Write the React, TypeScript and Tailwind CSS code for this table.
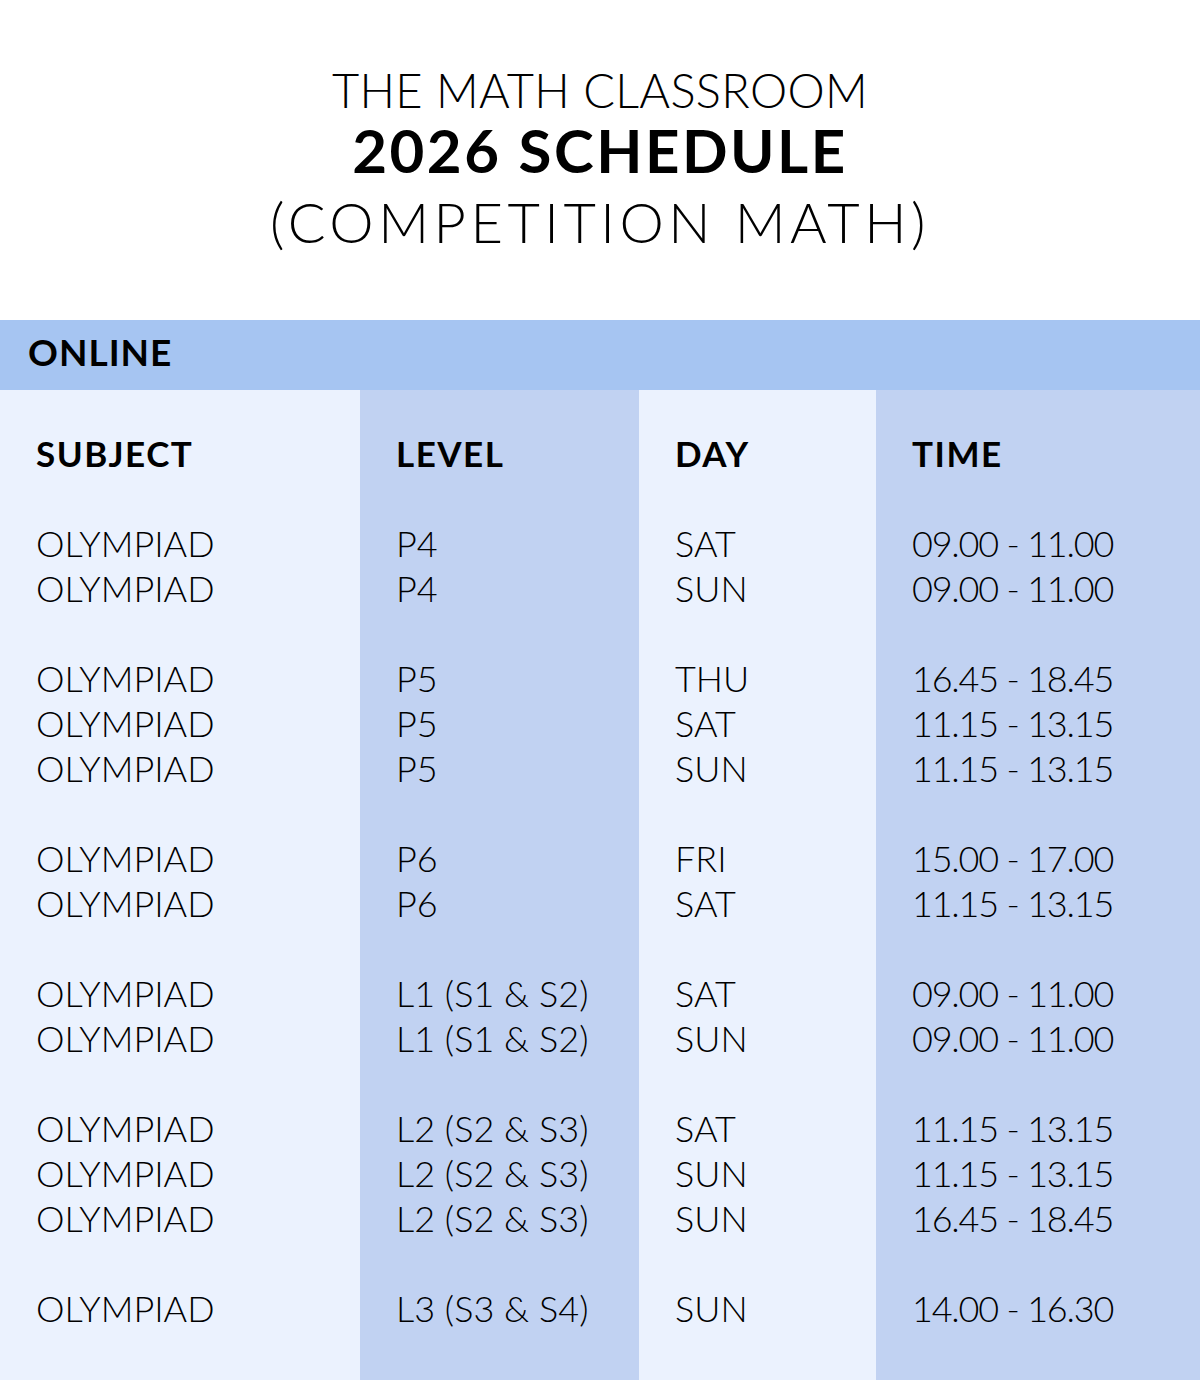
import React from "react";

type Row = [string, string, string, string] | null;

// null = empty spacer row between groups
const rows: Row[] = [
  ["OLYMPIAD", "P4", "SAT", "09.00 - 11.00"],
  ["OLYMPIAD", "P4", "SUN", "09.00 - 11.00"],
  null,
  ["OLYMPIAD", "P5", "THU", "16.45 - 18.45"],
  ["OLYMPIAD", "P5", "SAT", "11.15 - 13.15"],
  ["OLYMPIAD", "P5", "SUN", "11.15 - 13.15"],
  null,
  ["OLYMPIAD", "P6", "FRI", "15.00 - 17.00"],
  ["OLYMPIAD", "P6", "SAT", "11.15 - 13.15"],
  null,
  ["OLYMPIAD", "L1 (S1 & S2)", "SAT", "09.00 - 11.00"],
  ["OLYMPIAD", "L1 (S1 & S2)", "SUN", "09.00 - 11.00"],
  null,
  ["OLYMPIAD", "L2 (S2 & S3)", "SAT", "11.15 - 13.15"],
  ["OLYMPIAD", "L2 (S2 & S3)", "SUN", "11.15 - 13.15"],
  ["OLYMPIAD", "L2 (S2 & S3)", "SUN", "16.45 - 18.45"],
  null,
  ["OLYMPIAD", "L3 (S3 & S4)", "SUN", "14.00 - 16.30"],
];

const columns = [
  { title: "SUBJECT", width: "w-[360px]", bg: "bg-[#ebf2fe]", cell: "" },
  { title: "LEVEL", width: "w-[279px]", bg: "bg-[#c1d2f2]", cell: "" },
  { title: "DAY", width: "w-[237px]", bg: "bg-[#ebf2fe]", cell: "" },
  { title: "TIME", width: "w-[324px]", bg: "bg-[#c1d2f2]", cell: "tracking-[-1.2px]" },
];

export default function App() {
  return (
    <div className="w-[1200px] h-[1380px] bg-white text-black font-['Lato',sans-serif]">
      {/* heading */}
      <div className="h-[320px] flex flex-col items-center pt-[62px]">
        <div className="text-[47px] leading-[56px] font-light tracking-[0.3px]">THE MATH CLASSROOM</div>
        <div className="text-[60px] leading-[64px] font-bold tracking-[2.5px]">2026 SCHEDULE</div>
        <div className="text-[56px] leading-[79px] font-light tracking-[4.5px]">(COMPETITION MATH)</div>
      </div>

      <div className="h-[70px] bg-[#a6c5f2] flex items-center px-[28px] pb-[6px]">
        <span className="text-[37px] font-bold tracking-[1px]">ONLINE</span>
      </div>

      <div className="flex h-[990px]">
        {columns.map((col, ci) => (
          <div key={col.title} className={`${col.width} ${col.bg} pt-[41px] pl-[36px]`}>
            <div className="h-[45px] leading-[45px] text-[35px] font-bold tracking-[1.5px]">{col.title}</div>
            <div className="h-[45px]" />
            {rows.map((r, i) =>
              r ? (
                <div
                  key={i}
                  className={`h-[45px] leading-[45px] text-[36px] font-light whitespace-nowrap ${col.cell}`}
                >
                  {r[ci]}
                </div>
              ) : (
                <div key={i} className="h-[45px]" />
              )
            )}
          </div>
        ))}
      </div>
    </div>
  );
}
